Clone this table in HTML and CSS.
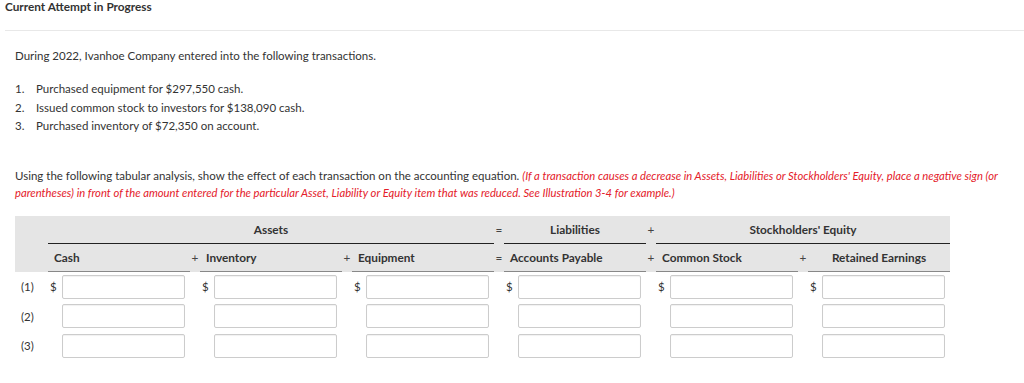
FILE: index.html
```html
<!DOCTYPE html>
<html lang="en">

<head>
    <meta charset="UTF-8">
    <meta name="viewport" content="width=device-width, initial-scale=1.0">
    <title>Current Attempt in Progress</title>
    <link rel="stylesheet" href="styles.css">
</head>

<body>
    <header class="attempt-header">
        <h1 class="attempt-title">Current Attempt in Progress</h1>
    </header>

    <main class="question">
        <p class="question-intro">During 2022, Ivanhoe Company entered into the following transactions.</p>

        <ol class="transactions">
            <li>Purchased equipment for $297,550 cash.</li>
            <li>Issued common stock to investors for $138,090 cash.</li>
            <li>Purchased inventory of $72,350 on account.</li>
        </ol>

        <p class="question-instructions">
            Using the following tabular analysis, show the effect of each transaction on the accounting equation.
            <em class="hint">(If a transaction causes a decrease in Assets, Liabilities or Stockholders' Equity, place a negative sign (or parentheses) in front of the amount entered for the particular Asset, Liability or Equity item that was reduced. See Illustration 3-4 for example.)</em>
        </p>

        <div class="equation">
            <!-- first header row -->
            <div class="head head-top"></div>
            <div class="head head-top group span-assets">Assets</div>
            <div class="head head-top sign">=</div>
            <div class="head head-top group">Liabilities</div>
            <div class="head head-top sign">+</div>
            <div class="head head-top group span-equity">Stockholders' Equity</div>

            <!-- second header row -->
            <div class="head head-sub"></div>
            <div class="head head-sub item">Cash</div>
            <div class="head head-sub sign">+</div>
            <div class="head head-sub item">Inventory</div>
            <div class="head head-sub sign">+</div>
            <div class="head head-sub item">Equipment</div>
            <div class="head head-sub sign">=</div>
            <div class="head head-sub item">Accounts Payable</div>
            <div class="head head-sub sign">+</div>
            <div class="head head-sub item">Common Stock</div>
            <div class="head head-sub sign">+</div>
            <div class="head head-sub item item-center">Retained Earnings</div>

            <!-- row 1 -->
            <div class="row-label row-first">(1)</div>
            <div class="cell row-first"><span class="dollar">$</span><input class="amount" type="text"></div>
            <div class="gap"></div>
            <div class="cell row-first"><span class="dollar">$</span><input class="amount" type="text"></div>
            <div class="gap"></div>
            <div class="cell row-first"><span class="dollar">$</span><input class="amount" type="text"></div>
            <div class="gap"></div>
            <div class="cell row-first"><span class="dollar">$</span><input class="amount" type="text"></div>
            <div class="gap"></div>
            <div class="cell row-first"><span class="dollar">$</span><input class="amount" type="text"></div>
            <div class="gap"></div>
            <div class="cell row-first"><span class="dollar">$</span><input class="amount" type="text"></div>

            <!-- row 2 -->
            <div class="row-label">(2)</div>
            <div class="cell"><span class="dollar"></span><input class="amount" type="text"></div>
            <div class="gap"></div>
            <div class="cell"><span class="dollar"></span><input class="amount" type="text"></div>
            <div class="gap"></div>
            <div class="cell"><span class="dollar"></span><input class="amount" type="text"></div>
            <div class="gap"></div>
            <div class="cell"><span class="dollar"></span><input class="amount" type="text"></div>
            <div class="gap"></div>
            <div class="cell"><span class="dollar"></span><input class="amount" type="text"></div>
            <div class="gap"></div>
            <div class="cell"><span class="dollar"></span><input class="amount" type="text"></div>

            <!-- row 3 -->
            <div class="row-label">(3)</div>
            <div class="cell"><span class="dollar"></span><input class="amount" type="text"></div>
            <div class="gap"></div>
            <div class="cell"><span class="dollar"></span><input class="amount" type="text"></div>
            <div class="gap"></div>
            <div class="cell"><span class="dollar"></span><input class="amount" type="text"></div>
            <div class="gap"></div>
            <div class="cell"><span class="dollar"></span><input class="amount" type="text"></div>
            <div class="gap"></div>
            <div class="cell"><span class="dollar"></span><input class="amount" type="text"></div>
            <div class="gap"></div>
            <div class="cell"><span class="dollar"></span><input class="amount" type="text"></div>
        </div>
    </main>
</body>

</html>
```

FILE: styles.css
```css
* {
    box-sizing: border-box;
    margin: 0;
    padding: 0;
}

body {
    font-family: Lato, "Open Sans", sans-serif;
    font-size: 11.5px;
    color: #333;
    background-color: #fff;
}

.attempt-header {
    height: 31px;
    margin-left: 5px;
    border-bottom: 1px solid #e8e8e8;
}

.attempt-title {
    font-size: 11.8px;
    font-weight: bold;
    line-height: 14px;
    color: #333;
}

.question {
    padding: 0 15px;
}

.question-intro {
    margin-top: 16px;
    line-height: 17px;
}

.transactions {
    margin-top: 16px;
    list-style: none;
    counter-reset: step;
}

.transactions li {
    counter-increment: step;
    line-height: 18.5px;
    padding-left: 21px;
    position: relative;
}

.transactions li::before {
    content: counter(step) ".";
    position: absolute;
    left: 0;
}

.question-instructions {
    margin-top: 31px;
    line-height: 17px;
}

.hint {
    color: #e4202a;
    font-size: 11.25px;
}

/* tabular analysis */
.equation {
    margin-top: 15px;
    display: grid;
    grid-template-columns: 33px 142px 10px 142px 10px 142px 10px 142px 10px 142px 10px 142px;
    width: 935px;
}

.head {
    background-color: #e5e5e5;
    font-size: 11.8px;
    font-weight: bold;
    display: flex;
    align-items: center;
    height: 28px;
}

.head-top.group {
    justify-content: center;
    border-bottom: 1px solid #222;
}

.span-assets {
    grid-column: span 5;
}

.span-equity {
    grid-column: span 3;
}

.head-sub.item {
    padding-left: 6px;
    border-bottom: 1px solid #888;
}

.head-sub.item-center {
    justify-content: center;
    padding-left: 0;
}

.sign {
    justify-content: center;
    font-weight: normal;
    color: #444;
}

.row-label,
.cell {
    display: flex;
    align-items: center;
    height: 24px;
    margin-top: 5.5px;
}

.row-first {
    margin-top: 3px;
}

.row-label {
    padding-left: 6px;
}

.cell {
    padding-right: 5px;
}

.dollar {
    width: 14px;
    padding-left: 2px;
    flex-shrink: 0;
}

.amount {
    width: 123px;
    height: 24px;
    border: 1px solid #ccc;
    border-radius: 2px;
    box-shadow: inset 0 1px 1px rgba(0, 0, 0, 0.06);
    background-color: #fff;
    font-family: inherit;
}
```
